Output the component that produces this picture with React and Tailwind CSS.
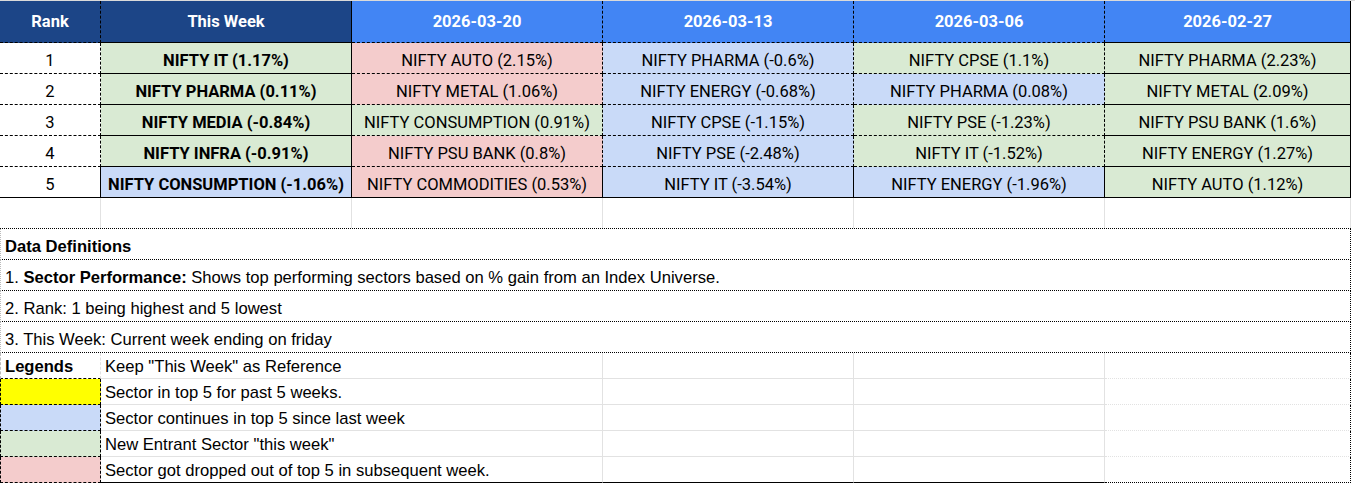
import React from "react";

const GREEN = "bg-[#d9ead3]";
const RED = "bg-[#f4cccc]";
const BLUE = "bg-[#c9daf8]";

const rows = [
  ["1", ["NIFTY IT (1.17%)", GREEN], ["NIFTY AUTO (2.15%)", RED], ["NIFTY PHARMA (-0.6%)", BLUE], ["NIFTY CPSE (1.1%)", GREEN], ["NIFTY PHARMA (2.23%)", GREEN]],
  ["2", ["NIFTY PHARMA (0.11%)", GREEN], ["NIFTY METAL (1.06%)", RED], ["NIFTY ENERGY (-0.68%)", BLUE], ["NIFTY PHARMA (0.08%)", BLUE], ["NIFTY METAL (2.09%)", GREEN]],
  ["3", ["NIFTY MEDIA (-0.84%)", GREEN], ["NIFTY CONSUMPTION (0.91%)", GREEN], ["NIFTY CPSE (-1.15%)", BLUE], ["NIFTY PSE (-1.23%)", GREEN], ["NIFTY PSU BANK (1.6%)", GREEN]],
  ["4", ["NIFTY INFRA (-0.91%)", GREEN], ["NIFTY PSU BANK (0.8%)", RED], ["NIFTY PSE (-2.48%)", BLUE], ["NIFTY IT (-1.52%)", GREEN], ["NIFTY ENERGY (1.27%)", GREEN]],
  ["5", ["NIFTY CONSUMPTION (-1.06%)", BLUE], ["NIFTY COMMODITIES (0.53%)", RED], ["NIFTY IT (-3.54%)", BLUE], ["NIFTY ENERGY (-1.96%)", BLUE], ["NIFTY AUTO (1.12%)", GREEN]],
];

const colRight = [
  "border-r border-dashed border-black",
  "border-r border-solid border-black",
  "border-r border-dashed border-black",
  "border-r border-dashed border-black",
  "border-r border-dashed border-black",
  "border-r border-solid border-black",
];

const headers = [
  ["Rank", "bg-[#1c4587]"],
  ["This Week", "bg-[#1c4587]"],
  ["2026-03-20", "bg-[#4285f4]"],
  ["2026-03-13", "bg-[#4285f4]"],
  ["2026-03-06", "bg-[#4285f4]"],
  ["2026-02-27", "bg-[#4285f4]"],
];

const GRID = "grid grid-cols-[101px_251px_251px_251px_251px_246px]";

const legends = [
  ["bg-[#ffff00]", "Sector in top 5 for past 5 weeks."],
  ["bg-[#c9daf8]", "Sector continues in top 5 since last week"],
  ["bg-[#d9ead3]", 'New Entrant Sector "this week"'],
  ["bg-[#f4cccc]", "Sector got dropped out of top 5 in subsequent week."],
];

export default function App() {
  return (
    <div className="w-[1355px] h-[485px] bg-white overflow-hidden text-black font-['Roboto',sans-serif]">
      {/* Header */}
      <div className={`${GRID} border-t border-[#dadada]`}>
        {headers.map(([t, bg], i) => (
          <div
            key={i}
            className={`${bg} ${colRight[i]} border-b border-dashed border-b-black h-[42px] flex items-center justify-center text-white font-bold text-[16.5px] leading-[19px]`}
          >
            {t}
          </div>
        ))}
      </div>

      {/* Data rows */}
      {rows.map((r, ri) => {
        const last = ri === rows.length - 1;
        const bottom = last ? "border-b border-solid border-b-black" : "border-b border-dashed border-b-black";
        return (
          <div key={ri} className={GRID}>
            <div className={`${colRight[0]} ${bottom} h-[31px] flex items-end justify-center pb-[3px] text-[16.5px] leading-[19px]`}>
              {r[0]}
            </div>
            {r.slice(1).map(([t, bg], ci) => (
              <div
                key={ci}
                className={`${bg} ${colRight[ci + 1]} ${bottom} h-[31px] flex items-end justify-center pb-[3px] text-[16.5px] leading-[19px] whitespace-nowrap ${ci === 0 ? "font-bold" : ""}`}
              >
                {t}
              </div>
            ))}
          </div>
        );
      })}

      {/* Empty row */}
      <div className={GRID}>
        {[0, 1, 2, 3, 4, 5].map((i) => (
          <div key={i} className="h-[30px] border-r border-[#e2e2e2]" />
        ))}
      </div>

      {/* Definitions */}
      <div className="w-[1351px] border-t border-dotted border-t-black font-['Liberation_Sans',Arial,sans-serif] text-[16.6px] leading-[19px]">
        <div className="h-[31px] border-b border-dotted border-b-black border-r border-r-black border-l border-l-[#bbbbbb] flex items-end pb-[3px] pl-[4px] font-bold">
          Data Definitions
        </div>
        <div className="h-[31px] border-b border-dotted border-b-black border-r border-r-black border-l border-l-[#bbbbbb] flex items-end pb-[3px] pl-[4px]">
          <span>
            1. <b>Sector Performance:</b> Shows top performing sectors based on % gain from an Index Universe.
          </span>
        </div>
        <div className="h-[31px] border-b border-dotted border-b-black border-r border-r-black border-l border-l-[#bbbbbb] flex items-end pb-[3px] pl-[4px]">
          2. Rank: 1 being highest and 5 lowest
        </div>
        <div className="h-[31px] border-b border-dotted border-b-black border-r border-r-black border-l border-l-[#bbbbbb] flex items-end pb-[3px] pl-[4px]">
          3. This Week: Current week ending on friday
        </div>

        {/* Legends header row */}
        <div className="grid grid-cols-[101px_502px_251px_251px_246px] h-[26px]">
          <div className="border-l border-l-[#bbbbbb] border-r border-r-[#e2e2e2] border-b border-dashed border-b-black flex items-end pb-[2px] pl-[4px] font-bold">
            Legends
          </div>
          <div className="border-r border-[#e2e2e2] border-b flex items-end pb-[2px] pl-[4px] whitespace-nowrap">
            Keep "This Week" as Reference
          </div>
          <div className="border-r border-[#e2e2e2] border-b" />
          <div className="border-r border-[#e2e2e2] border-b" />
          <div className="border-r border-dotted border-r-black border-b border-b-[#e2e2e2]" />
        </div>

        {legends.map(([bg, text], i) => {
          const last = i === legends.length - 1;
          const bb = last ? "border-b border-dotted border-b-black" : "border-b border-solid border-b-[#e2e2e2]";
          return (
            <div key={i} className="grid grid-cols-[101px_502px_251px_251px_246px] h-[26px]">
              <div className={`${bg} border-l border-r border-b border-dashed border-black`} />
              <div className={`border-r border-solid border-r-[#e2e2e2] ${bb} flex items-end pb-[2px] pl-[4px] whitespace-nowrap`}>
                {text}
              </div>
              <div className={`border-r border-solid border-r-[#e2e2e2] ${bb}`} />
              <div className={`border-r border-solid border-r-[#e2e2e2] ${bb}`} />
              <div className={`border-r border-dotted border-r-black ${last ? "border-b border-b-black" : "border-b border-b-[#e2e2e2]"}`} />
            </div>
          );
        })}
      </div>
    </div>
  );
}
